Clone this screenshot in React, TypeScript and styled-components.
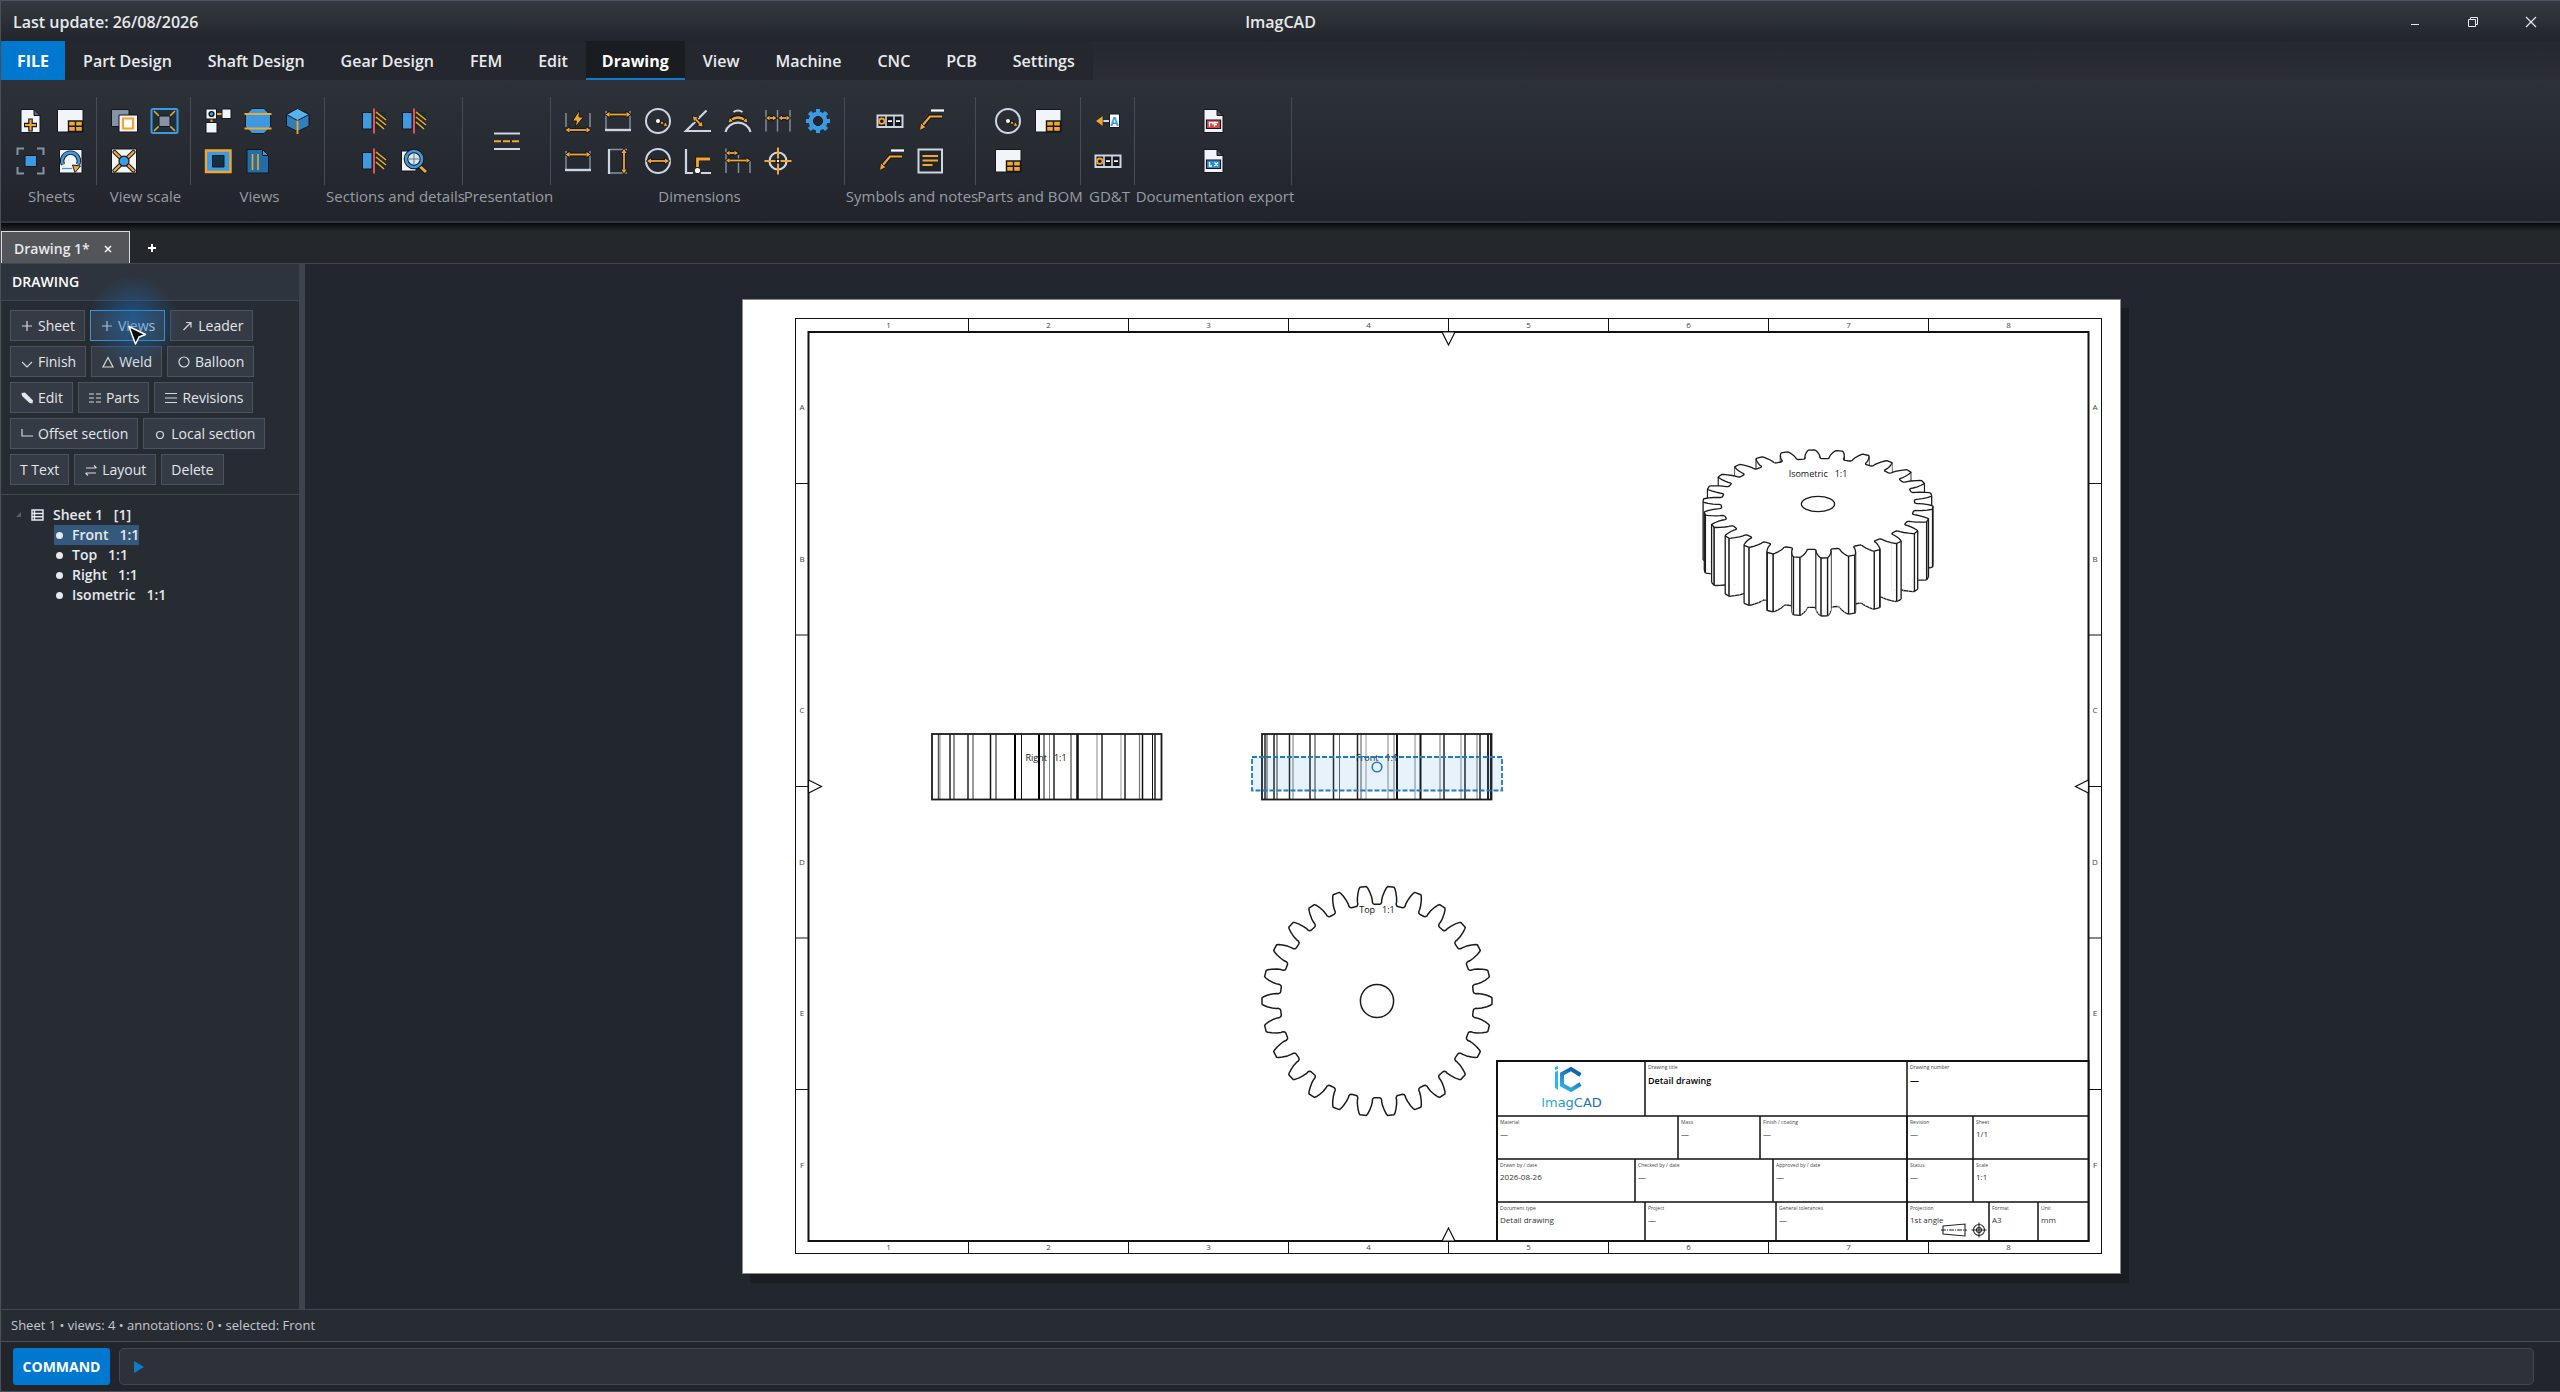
import React from 'react';
import styled, { createGlobalStyle, css } from 'styled-components';

const uiFont = '"Open Sans", "Noto Sans", sans-serif';
const ink = '#14171b';
const orange = '#f0a62f';
const blue = '#3d9ae0';
const paper = '#f1f4f8';
const steel = '#8792a2';
const pale = '#ccd6e4';

const GlobalStyle = createGlobalStyle`
  * { box-sizing: border-box; }
  body { margin: 0; background: #22262e; }
  button, input { font: inherit; color: inherit; }
`;

const Shell = styled.div`
  display: flex;
  flex-direction: column;
  height: 100vh;
  font-family: ${uiFont};
  font-size: 14px;
  line-height: 20px;
  color: #e6e9ed;
  background: #262b32;
  border-left: 1px solid #4a5058;
`;

/* ---------- title bar and ribbon ---------- */

const TitleBar = styled.header`
  display: grid;
  grid-template-columns: 1fr auto 1fr;
  align-items: center;
  height: 41px;
  padding-top: 2px;
  border-top: 1px solid #4d525b;
  background: linear-gradient(#343941, #22252b);
  font-size: 16px;
  font-weight: 600;
`;

const UpdateNote = styled.span`
  padding-left: 12px;
`;

const AppName = styled.h1`
  margin: 0;
  font-size: 16px;
  font-weight: 600;
`;

const WindowButtons = styled.div`
  display: flex;
  justify-content: flex-end;
`;

const WindowButton = styled.button`
  display: grid;
  place-items: center;
  width: 58px;
  height: 38px;
  padding: 0;
  border: 0;
  background: none;
`;

const TabBar = styled.nav`
  display: flex;
  height: 39px;
  background: linear-gradient(#25282e, #2a2e35);
`;

const RibbonTab = styled.button<{ $kind?: 'file' | 'active' }>`
  padding: 2px 18px 0;
  border: 0;
  border-bottom: 2px solid transparent;
  background: #24272d;
  color: #e8eaed;
  font-size: 16px;
  font-weight: 600;
  white-space: nowrap;
  ${({ $kind }) => $kind === 'file' && css`
    padding: 2px 16px 0;
    background: #0078d0;
    border-color: #0078d0;
    color: #fff;
    font-weight: 700;
  `}
  ${({ $kind }) => $kind === 'active' && css`
    padding: 2px 16px 0;
    background: #191c20;
    border-color: #0a7dd0;
    color: #fff;
    font-weight: 700;
  `}
`;

const Ribbon = styled.div`
  display: flex;
  height: 143px;
  padding: 17px 0 0 2px;
  border-bottom: 2px solid #33373d;
  background: linear-gradient(#2d3138, #21252b);
`;

const Group = styled.section<{ $width: number }>`
  display: flex;
  flex-direction: column;
  align-items: center;
  width: ${({ $width }) => $width}px;
  flex: none;
`;

const GroupIcons = styled.div<{ $cols: number }>`
  display: grid;
  grid-template-columns: repeat(${({ $cols }) => $cols}, 40px);
  grid-auto-rows: 40px;
  align-content: center;
  justify-content: center;
  width: 100%;
  height: 88px;
  border-right: 1px solid #484c54;
`;

const ToolButton = styled.button`
  display: grid;
  place-items: center;
  padding: 0;
  border: 0;
  background: none;
`;

const GroupLabel = styled.h2`
  margin: 0;
  padding-left: 3px;
  font-size: 15px;
  line-height: 22px;
  font-weight: 400;
  color: #979ca4;
  white-space: nowrap;
`;

const DocTabs = styled.div`
  display: flex;
  align-items: flex-end;
  height: 41px;
  border-bottom: 1px solid #42474f;
  background: linear-gradient(#07090b, #24282c 8px);
`;

const DocTab = styled.div`
  display: flex;
  align-items: center;
  justify-content: space-between;
  width: 129px;
  height: 32px;
  padding: 2px 12px 0;
  border: 1px solid #d8dade;
  border-bottom: 0;
  background: #535559;
  font-weight: 600;
`;

const FlatButton = styled.button`
  display: grid;
  place-items: center;
  width: 18px;
  height: 30px;
  padding: 0;
  border: 0;
  background: none;
`;

const NewTabButton = styled(FlatButton)`
  width: 44px;
`;

/* ---------- work area ---------- */

const Workspace = styled.main`
  display: flex;
  flex: 1;
  min-height: 0;
`;

const Sidebar = styled.aside`
  width: 298px;
  flex: none;
  background: #272c33;
`;

const Splitter = styled.div`
  width: 6px;
  flex: none;
  background: #3e444c;
`;

const PanelTitle = styled.h2`
  height: 37px;
  margin: 0;
  padding: 0 11px;
  border-bottom: 1px solid #424850;
  background: #2e343d;
  color: #fff;
  font-size: 14px;
  line-height: 36px;
  font-weight: 600;
`;

const ActionRows = styled.div`
  display: flex;
  flex-direction: column;
  gap: 5px;
  padding: 9px;
  border-bottom: 1px solid #424850;
`;

const ActionRow = styled.div`
  display: flex;
  gap: 5px;
`;

const ActionButton = styled.button<{ $hot?: boolean }>`
  position: relative;
  display: flex;
  align-items: center;
  gap: 4px;
  height: 31px;
  padding: 0 9px;
  border: 1px solid ${({ $hot }) => ($hot ? '#3a96dd' : '#4b535c')};
  background: #343b44;
  color: #e3e6ea;
  white-space: nowrap;
`;

const PointerGlow = styled.span`
  position: absolute;
  z-index: 1;
  left: -4px;
  top: -35px;
  width: 92px;
  height: 92px;
  border-radius: 50%;
  background: radial-gradient(closest-side, rgba(28, 110, 190, 0.6), rgba(28, 110, 190, 0.3) 50%, rgba(28, 110, 190, 0));
  pointer-events: none;
`;

const Pointer = styled.svg`
  position: absolute;
  z-index: 2;
  left: 34px;
  top: 12px;
  pointer-events: none;
`;

const Tree = styled.ul`
  margin: 0;
  padding: 10px 0 0 15px;
  list-style: none;
  font-weight: 600;
`;

const Branch = styled.ul`
  margin: 0;
  padding: 0 0 0 38px;
  list-style: none;
`;

const NodeRow = styled.div`
  display: flex;
  align-items: center;
  height: 20px;
  gap: 9px;
  white-space: pre;
`;

const Leaf = styled.li<{ $selected?: boolean }>`
  display: flex;
  align-items: center;
  gap: 9px;
  width: fit-content;
  height: 20px;
  padding-left: 2px;
  background: ${({ $selected }) => ($selected ? '#34597c' : 'transparent')};
  white-space: pre;
`;

const Bullet = styled.span`
  width: 7px;
  height: 7px;
  border-radius: 50%;
  background: #e6e9ed;
`;

const Canvas = styled.section`
  flex: 1;
  min-width: 0;
  display: grid;
  place-items: center;
  padding: 35px 36px 35px 34px;
  background: #22262e;
`;

const Sheet = styled.svg`
  display: block;
  height: calc(100vh - 417px);
  max-width: 100%;
  aspect-ratio: 1379 / 975;
  background: #fff;
  box-shadow: inset 0 0 0 1px #85888c, 8px 9px 0 #1a1d22;
`;

/* ---------- footer ---------- */

const StatusBar = styled.div`
  height: 33px;
  padding: 0 10px;
  border-top: 1px solid #42474f;
  border-bottom: 1px solid #4b5057;
  background: #272c33;
  color: #c3c9d0;
  font-size: 13px;
  line-height: 31px;
`;

const CommandBar = styled.div`
  display: flex;
  gap: 9px;
  height: 50px;
  padding: 6px 26px 6px 12px;
  border-bottom: 1px solid #4b5057;
  background: #22262c;
`;

const CommandButton = styled.button`
  width: 97px;
  padding: 0;
  border: 0;
  border-radius: 3px;
  background: #0078d0;
  color: #fff;
  font-weight: 700;
`;

const CommandField = styled.label`
  display: flex;
  flex: 1;
  align-items: center;
  gap: 8px;
  padding: 0 13px;
  border: 1px solid #43474e;
  border-radius: 5px;
  background: #2e3138;
`;

const CommandInput = styled.input`
  flex: 1;
  border: 0;
  outline: 0;
  background: none;
`;

/* ---------- ribbon icons, 32 x 32 ---------- */

type ArrowProps = { x1: number; y1: number; x2: number; y2: number; head?: number };

function DoubleArrow({ x1, y1, x2, y2, head = 4 }: ArrowProps) {
  const len = Math.hypot(x2 - x1, y2 - y1);
  const ux = (x2 - x1) / len;
  const uy = (y2 - y1) / len;
  const h = head * 0.65;
  const tip = (x: number, y: number, s: number) =>
    `M${x} ${y}L${x + s * ux * head - uy * h} ${y + s * uy * head + ux * h}L${x + s * ux * head + uy * h} ${y + s * uy * head - ux * h}Z`;
  const d = tip(x1, y1, 1) + tip(x2, y2, -1);
  const shaft = `M${x1 + ux * head} ${y1 + uy * head}L${x2 - ux * head} ${y2 - uy * head}`;
  return (
    <g>
      <path d={shaft} stroke={ink} strokeWidth="4" />
      <path d={d} fill={ink} stroke={ink} strokeWidth="1.6" />
      <path d={d} fill={orange} />
      <path d={shaft} stroke={orange} strokeWidth="1.8" />
    </g>
  );
}

const pagePath = 'M7 4.5H20L26 10.5V27.5H7Z';

const tableSheet = (
  <>
    <path d="M3.5 4.5H29V27H3.5Z" fill={paper} stroke={ink} />
    <path d="M14.5 16H28.5V26.5H14.5Z" fill={orange} stroke={ink} strokeWidth="1.4" />
    <path d="M21.5 16V26.5M14.5 21.2H28.5" stroke={ink} strokeWidth="1.4" />
  </>
);

const section = (
  <>
    <path d="M17 7H28V24H17Z" fill="#1c2a2c" />
    <path d="M4.5 7.5H14V24H4.5Z" fill={blue} stroke={ink} />
    <path d="M18 7L28 15M18 12L28 20M18 17L26 24" stroke={orange} strokeWidth="1.6" />
    <path d="M16 3.5V28.5" stroke="#e5514f" strokeWidth="2" />
  </>
);

const linear = (
  <>
    <path d="M4 6V24M28 6V24" stroke={steel} strokeWidth="1.4" />
    <path d="M3 25H29" stroke={pale} strokeWidth="2.4" />
    <DoubleArrow x1={3.5} y1={9.5} x2={28.5} y2={9.5} />
  </>
);

const radius = (
  <>
    <circle cx="16" cy="16" r="12" stroke={pale} strokeWidth="2" />
    <path d="M17 16.5L26 20.5" stroke={ink} strokeWidth="4" />
    <path d="M19 17.5L23 19.2" stroke={orange} strokeWidth="2" strokeDasharray="2 1" />
    <path d="M26 21L21 21.5L23.5 16.8Z" fill={orange} stroke={ink} strokeWidth=".8" />
    <circle cx="16" cy="16" r="2" fill="#fff" />
  </>
);

const controlFrame = (
  <>
    <path d="M3.5 10.5H28.5V22H3.5Z" fill={ink} stroke={pale} strokeWidth="2" />
    <path d="M12 11V22M20 11V22" stroke={pale} strokeWidth="1.6" />
    <circle cx="7.8" cy="16.2" r="2.7" stroke={orange} strokeWidth="1.8" />
    <path d="M14 16.2H18M22 16.2H26" stroke="#fff" strokeWidth="1.8" />
  </>
);

const leader = (
  <>
    <path d="M17 5.5H30" stroke="#fff" strokeWidth="2.2" />
    <path d="M8 22L16 11.5H28" stroke={ink} strokeWidth="4.5" />
    <path d="M8 21L16 11.5H28" stroke={orange} strokeWidth="2.2" />
    <path d="M5.5 25.5L6.8 18L12 22.3Z" fill={orange} stroke={ink} strokeWidth=".8" />
  </>
);

const exportPage = (color: string, mark: string) => (
  <>
    <path d={pagePath} fill={paper} stroke={ink} />
    <path d="M20 4.5V10.5H26Z" fill="#4b525c" stroke={ink} />
    <path d="M9.5 15H23.5V23.5H9.5Z" fill={color} stroke={ink} strokeWidth="1.2" />
    <path d={mark} stroke="#fff" strokeWidth="1.3" />
  </>
);

const gearTeeth = Array.from({ length: 8 }, (_, i) => i * 45);

const icons: Record<string, React.ReactNode> = {
  newSheet: (
    <>
      <path d={pagePath} fill={paper} stroke={ink} />
      <path d="M20 4.5V10.5H26Z" fill="#596270" stroke={ink} />
      <path d="M16.5 13.5V26.5M10 20H23" stroke={ink} strokeWidth="4.6" />
      <path d="M16.5 14.5V25.5M11 20H22" stroke={orange} strokeWidth="2.2" />
    </>
  ),
  tableSheet,
  fit: (
    <>
      <path d="M3.5 10V3.5H10M23 3.5H29.5V10M29.5 22V28.5H23M10 28.5H3.5V22" stroke={steel} strokeWidth="2" />
      <path d="M11 10.5H22.5V21.5H11Z" fill={blue} stroke={ink} />
    </>
  ),
  rotate: (
    <>
      <path d="M5.5 4.5H28V28H5.5Z" fill={paper} stroke={ink} />
      <path d="M9 19.5A8.3 8.3 0 1 1 24 19.5" stroke={ink} strokeWidth="4.4" />
      <path d="M9 19.5A8.3 8.3 0 1 1 24 19.5" stroke={blue} strokeWidth="2.6" />
      <path d="M8 23.5H18" stroke={blue} strokeWidth="1.2" />
      <path d="M18.5 20L26.5 21L21 27.5Z" fill={orange} stroke={ink} />
    </>
  ),
  scaleSheet: (
    <>
      <path d="M3.5 4.5H21V21.5H3.5Z" fill={steel} stroke={ink} />
      <path d="M11 10H29.5V27H11Z" fill={paper} stroke={ink} />
      <path d="M15 13.5H25V23.5H15Z" fill="#fff" stroke={orange} strokeWidth="2.2" />
    </>
  ),
  scaleFit: (
    <>
      <rect x="3.5" y="4" width="26" height="24" rx="1.5" fill="#20303b" stroke={blue} strokeWidth="2" />
      <path d="M6 6L11 11M27 6L22 11M6 26L11 21M27 26L22 21" stroke={orange} strokeWidth="1.6" />
      <path d="M11 11H22V21.5H11Z" fill={steel} stroke={ink} />
    </>
  ),
  scaleCustom: (
    <>
      <path d="M3.5 4H28.5V28H3.5Z" fill={paper} stroke={ink} />
      <path d="M6.5 7L25.5 25.5M25.5 7L6.5 25.5" stroke={ink} strokeWidth="4.4" strokeLinecap="round" />
      <path d="M6.5 7L25.5 25.5M25.5 7L6.5 25.5" stroke={orange} strokeWidth="2.4" strokeLinecap="round" />
      <circle cx="16" cy="16.2" r="5" fill={blue} stroke={ink} strokeWidth="1.2" />
    </>
  ),
  projected: (
    <>
      <path d="M14 9H20M9.5 13V18" stroke={orange} strokeWidth="2" />
      <path d="M4 4H14.5V14H4ZM20 4H29V13.5H20ZM4 17.5H15V28H4Z" fill={paper} stroke={ink} />
      <circle cx="9.5" cy="9" r="2.4" fill={blue} stroke={ink} strokeWidth="1.4" />
    </>
  ),
  breakView: (
    <>
      <path d="M10 3.5H22L28.5 10V22L22 28.5H10L3.5 22V10Z" fill={blue} stroke={ink} />
      <path d="M2.5 9H29.5M2.5 23.5H29.5" stroke={orange} strokeWidth="1.8" />
    </>
  ),
  cube: (
    <>
      <path d="M15.5 3.5L27 9.5V21L15.5 26.5L4.5 21V9.5Z" fill="#2f7fbd" stroke={ink} />
      <path d="M15.5 3.5L27 9.5L15.5 15.5L4.5 9.5Z" fill="#56b2f0" stroke={ink} />
      <path d="M15.5 15.5V29" stroke={orange} strokeWidth="1.8" />
    </>
  ),
  crop: (
    <>
      <path d="M4 5.5H28.5V27H4Z" fill={blue} stroke={orange} strokeWidth="2.4" />
      <path d="M10.5 10.5H22V22H10.5Z" fill="#12303f" stroke={ink} />
    </>
  ),
  brokenPage: (
    <>
      <path d="M5 4.5H20.5L26.5 10.5V28H5Z" fill="#226da6" stroke={ink} />
      <path d="M20.5 4.5V10.5H26.5Z" fill={blue} stroke={ink} />
      <path d="M10.5 9V25M16 9V25" stroke={orange} strokeWidth="1.6" />
    </>
  ),
  section,
  detail: (
    <>
      <path d="M3.5 6H18V26H3.5Z" fill={paper} stroke={ink} />
      <path d="M20.5 20L28 27.5" stroke={ink} strokeWidth="5" />
      <path d="M20.5 20L28 27" stroke={orange} strokeWidth="3" />
      <circle cx="16" cy="14" r="8" fill="#d7e6f2" stroke={ink} strokeWidth="4.6" />
      <circle cx="16" cy="14" r="8" stroke={blue} strokeWidth="2.6" />
      <path d="M16 8.5V19.5M10.5 14H21.5" stroke="#6b7683" />
    </>
  ),
  lines: (
    <>
      <path d="M3 8.5H29M3 24H29" stroke={pale} strokeWidth="2.2" />
      <path d="M3 16.2H29" stroke={orange} strokeWidth="2" strokeDasharray="7 2" />
    </>
  ),
  smart: (
    <>
      <path d="M4 8V22M28 8V22" stroke={steel} strokeWidth="1.4" />
      <path d="M17.5 5L10.5 16H14.5L13 22.5L21.5 12H17Z" fill={orange} stroke={ink} />
      <DoubleArrow x1={3.5} y1={25} x2={28.5} y2={25} />
    </>
  ),
  linear,
  radius,
  angle: (
    <>
      <path d="M24.5 5.5L4 26H29" stroke={pale} strokeWidth="2.2" />
      <DoubleArrow x1={11} y1={11.5} x2={20.5} y2={21.5} />
    </>
  ),
  arc: (
    <>
      <path d="M11.5 7Q16 4 20.5 7" stroke={pale} strokeWidth="2" />
      <path d="M3.5 27A13 13 0 0 1 28.5 27" stroke={pale} strokeWidth="2.2" />
      <path d="M7.5 16Q16 8 24.5 16" stroke={ink} strokeWidth="4.6" />
      <path d="M8.5 15.5Q16 9.5 23.5 15.5" stroke={orange} strokeWidth="2.2" />
      <path d="M6 18L7.5 12.5L11.5 16.5ZM26 18L24.5 12.5L20.5 16.5Z" fill={orange} stroke={ink} strokeWidth=".8" />
    </>
  ),
  chain: (
    <>
      <path d="M4 5V26.5M15.5 5V26.5M28 5V26.5" stroke={steel} strokeWidth="1.4" />
      <DoubleArrow x1={4} y1={13} x2={14.5} y2={13} head={3.5} />
      <DoubleArrow x1={16.5} y1={13} x2={28} y2={13} head={3.5} />
    </>
  ),
  gear: (
    <>
      {gearTeeth.map((a) => (
        <rect key={a} x="13.5" y="3.5" width="5" height="7" fill={blue} stroke={ink} strokeWidth=".6" transform={`rotate(${a} 16 16)`} />
      ))}
      <circle cx="16" cy="16" r="7" stroke={blue} strokeWidth="5" />
      <circle cx="16" cy="16" r="4.5" fill="#23272d" stroke={ink} />
    </>
  ),
  vertical: (
    <>
      <path d="M8 4.5H25M8 28H25" stroke={steel} strokeWidth="1.4" />
      <path d="M7 4V29" stroke={pale} strokeWidth="2.2" />
      <DoubleArrow x1={22} y1={4} x2={22} y2={28.5} />
    </>
  ),
  diameter: (
    <>
      <circle cx="16" cy="16" r="12" stroke={pale} strokeWidth="2" />
      <DoubleArrow x1={5} y1={16} x2={27} y2={16} />
    </>
  ),
  ordinate: (
    <>
      <path d="M4 4V28H11M19 28H29" stroke={pale} strokeWidth="2.2" />
      <path d="M15.5 22V14H28" stroke={ink} strokeWidth="4.5" />
      <path d="M15.5 22V14H28" stroke={orange} strokeWidth="2.8" />
      <circle cx="15.5" cy="25.5" r="2.6" fill="#fff" />
    </>
  ),
  baseline: (
    <>
      <path d="M4 3.5V28M16.5 10V28M28 15V28" stroke={steel} strokeWidth="1.4" />
      <DoubleArrow x1={4} y1={8} x2={16} y2={8} head={3.5} />
      <DoubleArrow x1={4} y1={15.5} x2={28} y2={15.5} head={3.5} />
    </>
  ),
  centerMark: (
    <>
      <circle cx="16" cy="16" r="8.5" stroke={pale} strokeWidth="2.2" />
      <path d="M16 2.5V29.5M2.5 16H29.5" stroke={orange} strokeWidth="2" />
      <circle cx="16" cy="16" r="2.6" fill={ink} />
      <circle cx="16" cy="16" r="1.2" fill="#fff" />
    </>
  ),
  controlFrame,
  leader,
  note: (
    <>
      <path d="M4.5 4.5H28V27.5H4.5Z" fill="#20252b" stroke={pale} strokeWidth="2" />
      <path d="M8.5 11H24M8.5 15.5H24M8.5 20H18.5" stroke={orange} strokeWidth="1.8" />
    </>
  ),
  datum: (
    <>
      <path d="M9 16H18" stroke={pale} strokeWidth="2" />
      <path d="M3.5 16L11 10.5V21.5Z" fill={orange} stroke={ink} strokeWidth=".6" />
      <path d="M17.5 9H27.5V22.5H17.5Z" fill="#fff" stroke={ink} />
      <text x="22.5" y="20.5" textAnchor="middle" fontSize="12" fontWeight="700" fill={blue}>A</text>
    </>
  ),
  exportPdf: exportPage('#d24a48', 'M12.5 21.5V17.5H16V19.5M17.5 21.5V17.5H21M17.5 19.5H20'),
  exportDxf: exportPage('#2f8bd0', 'M12.5 17V21H15M17.5 17.5L21 21M21 17.5L17.5 21'),
};

const ribbonGroups: { label: string; width: number; cols: number; tools: [string, string][] }[] = [
  { label: 'Sheets', width: 94, cols: 2, tools: [['New sheet', 'newSheet'], ['Sheet format', 'tableSheet'], ['Fit sheet', 'fit'], ['Update sheet', 'rotate']] },
  { label: 'View scale', width: 94, cols: 2, tools: [['Sheet scale', 'scaleSheet'], ['Scale to fit', 'scaleFit'], ['Custom scale', 'scaleCustom']] },
  { label: 'Views', width: 134, cols: 3, tools: [['Projected views', 'projected'], ['Break view', 'breakView'], ['Isometric view', 'cube'], ['Crop view', 'crop'], ['Broken-out view', 'brokenPage']] },
  { label: 'Sections and details', width: 138, cols: 2, tools: [['Section', 'section'], ['Offset section', 'section'], ['Local section', 'section'], ['Detail view', 'detail']] },
  { label: 'Presentation', width: 88, cols: 1, tools: [['Line display', 'lines']] },
  { label: 'Dimensions', width: 294, cols: 7, tools: [['Smart', 'smart'], ['Horizontal', 'linear'], ['Radius', 'radius'], ['Angle', 'angle'], ['Arc length', 'arc'], ['Chain', 'chain'], ['Dimension settings', 'gear'], ['Linear', 'linear'], ['Vertical', 'vertical'], ['Diameter', 'diameter'], ['Ordinate', 'ordinate'], ['Baseline', 'baseline'], ['Center mark', 'centerMark']] },
  { label: 'Symbols and notes', width: 131, cols: 2, tools: [['Symbol frame', 'controlFrame'], ['Leader', 'leader'], ['Leader note', 'leader'], ['Note', 'note']] },
  { label: 'Parts and BOM', width: 105, cols: 2, tools: [['Balloon', 'radius'], ['Parts list', 'tableSheet'], ['Revision table', 'tableSheet']] },
  { label: 'GD&T', width: 54, cols: 1, tools: [['Datum', 'datum'], ['Control frame', 'controlFrame']] },
  { label: 'Documentation export', width: 157, cols: 1, tools: [['Export PDF', 'exportPdf'], ['Export DXF', 'exportDxf']] },
];

const tabs = ['FILE', 'Part Design', 'Shaft Design', 'Gear Design', 'FEM', 'Edit', 'Drawing', 'View', 'Machine', 'CNC', 'PCB', 'Settings'];

/* ---------- sidebar actions ---------- */

const glyphs: Record<string, string> = {
  plus: 'M2 8H12M7 3V13',
  leader: 'M3.5 12L10.5 5M6 4.5H11V9.5',
  check: 'M2 8L7 13L12 8',
  triangle: 'M7 3.5L12 13H2Z',
  circle: 'M7 3A5 5 0 1 1 7 13A5 5 0 1 1 7 3',
  list: 'M1 4H6M8 4H13M1 8H6M8 8H13M1 12H6M8 12H13',
  menu: 'M1 3.5H13M1 8H13M1 12.5H13',
  corner: 'M2 3V10H13',
  dot: 'M7 5.5A3.5 3.5 0 1 1 7 12.5A3.5 3.5 0 1 1 7 5.5',
  swap: 'M2 6H12M10 3.5L12.5 6M12 11H2M4 13.5L1.5 11',
};

const actionRows: { label: string; icon?: string; hot?: boolean }[][] = [
  [{ label: 'Sheet', icon: 'plus' }, { label: 'Views', icon: 'plus', hot: true }, { label: 'Leader', icon: 'leader' }],
  [{ label: 'Finish', icon: 'check' }, { label: 'Weld', icon: 'triangle' }, { label: 'Balloon', icon: 'circle' }],
  [{ label: 'Edit', icon: 'pencil' }, { label: 'Parts', icon: 'list' }, { label: 'Revisions', icon: 'menu' }],
  [{ label: 'Offset section', icon: 'corner' }, { label: 'Local section', icon: 'dot' }],
  [{ label: 'T Text' }, { label: 'Layout', icon: 'swap' }, { label: 'Delete' }],
];

function Glyph({ name }: { name: string }) {
  return (
    <svg width="14" height="16" viewBox="0 0 14 16" fill="none" stroke="#d5d9de" strokeWidth="1.2" aria-hidden="true">
      {name === 'pencil' ? (
        <path d="M1.5 3L5 2.5L13 10.5L12.5 13.5L9.5 13L2 6Z" fill="#e3e6ea" stroke="none" />
      ) : (
        <path d={glyphs[name]} />
      )}
    </svg>
  );
}

/* ---------- drawing geometry ---------- */

const TEETH = 26;
/* radius and half angle of a tooth, from root to tip */
const toothProfile: [number, number][] = [
  [96.7, 0.096], [97.2, 0.083], [98.8, 0.074], [101, 0.074], [105, 0.067], [110, 0.052],
  [113.5, 0.038], [115, 0.028],
];

type Vertex = { x: number; y: number; corner: boolean };

function gearOutline(phase: number): Vertex[] {
  const pts: Vertex[] = [];
  for (let i = 0; i < TEETH; i++) {
    const mid = phase + (i * 2 * Math.PI) / TEETH;
    const add = (r: number, a: number, corner: boolean) => pts.push({ x: r * Math.cos(a), y: r * Math.sin(a), corner });
    toothProfile.forEach(([r, h], k) => add(r, mid - h, k === toothProfile.length - 1));
    [...toothProfile].reverse().forEach(([r, h], k) => add(r, mid + h, k === 0));
  }
  return pts;
}

const f = (n: number) => n.toFixed(1);

function TopGear() {
  const d = gearOutline(0).map((p, i) => `${i ? 'L' : 'M'}${f(635 + p.x)} ${f(702 + p.y)}`).join('') + 'Z';
  return (
    <g stroke="#1b1b1b" strokeWidth="1.5" fill="none" strokeLinejoin="round">
      <path d={d} />
      <circle cx="635" cy="702" r="16.6" />
    </g>
  );
}

function IsoGear() {
  const cx = 1076;
  const cy = 205;
  const tilt = 0.47;
  const depth = 58;
  const pts = gearOutline(Math.PI / 2 - 0.055);
  const n = pts.length;
  const px = (p: Vertex) => cx + p.x;
  const py = (p: Vertex) => cy + p.y * tilt;
  const facing = (i: number) => pts[(i + 1) % n].x < pts[i].x;
  const faces = pts
    .map((a, i) => ({ a, b: pts[(i + 1) % n], i }))
    .filter(({ i }) => facing(i))
    .sort((p, q) => p.a.y + p.b.y - q.a.y - q.b.y);
  const top = pts.map((p, i) => `${i ? 'L' : 'M'}${f(px(p))} ${f(py(p))}`).join('') + 'Z';
  return (
    <g stroke="#1b1b1b" strokeWidth="1.3" fill="none" strokeLinejoin="round">
      {faces.map(({ a, b, i }) => {
        const edgeA = a.corner || !facing((i - 1 + n) % n);
        const edgeB = b.corner || !facing((i + 1) % n);
        return (
          <g key={i}>
            <path
              d={`M${f(px(a))} ${f(py(a))}L${f(px(b))} ${f(py(b))}V${f(py(b) + depth)}L${f(px(a))} ${f(py(a) + depth)}Z`}
              fill="#fff"
              stroke="#fff"
              strokeWidth=".3"
            />
            <path d={`M${f(px(a))} ${f(py(a) + depth)}L${f(px(b))} ${f(py(b) + depth)}`} />
            {edgeA && <path d={`M${f(px(a))} ${f(py(a))}v${depth}`} />}
            {edgeB && <path d={`M${f(px(b))} ${f(py(b))}v${depth}`} />}
          </g>
        );
      })}
      <path d={top} fill="#fff" />
      <ellipse cx={cx} cy={cy} rx="16.6" ry="7.7" />
    </g>
  );
}

/* x offset, stroke weight, shade */
const rightLines: [number, number, string][] = [
  [6.5, 1.5, '#555'], [8, 1, '#888'], [18, 1.5, '#222'], [22, 1, '#222'], [36, 1.5, '#222'], [41, 1, '#333'],
  [58.5, 1.5, '#111'], [64, 1, '#111'], [83, 2, '#000'], [89.5, 1, '#111'], [107, 2, '#000'], [112, 1, '#111'],
  [117.5, 1, '#888'], [122, 1.5, '#222'], [139, 1, '#222'], [145.5, 2.5, '#111'], [165, 1, '#888'], [170, 1.5, '#222'],
  [189, 1, '#999'], [193, 1.5, '#222'], [207.5, 1.2, '#777'], [210.5, 1.5, '#111'], [220.5, 1, '#111'], [223, 1.5, '#222'],
];
const frontLines: [number, number, string][] = [
  [3, 1.5, '#222'], [5, 1, '#444'], [12, 1.5, '#222'], [15, 1, '#333'], [27.5, 1.5, '#222'], [31, 1, '#777'],
  [48, 1.5, '#222'], [53, 1, '#333'], [71.5, 1.5, '#222'], [77.5, 1, '#666'], [95.5, 1.5, '#222'], [99, 1, '#555'],
  [104, 1, '#999'], [126, 1, '#888'], [132, 1, '#777'], [135, 2, '#111'], [153, 1, '#888'], [158.5, 2, '#111'],
  [178, 1, '#777'], [182, 1.5, '#222'], [199, 1, '#888'], [203, 1.5, '#222'], [215, 1, '#777'], [218, 1.5, '#222'],
  [226, 1.8, '#111'], [228.5, 1.2, '#222'],
];

function SideView({ x, lines }: { x: number; lines: [number, number, string][] }) {
  return (
    <g fill="none">
      {lines.map(([dx, w, c]) => (
        <path key={dx} d={`M${x + dx} 435V500.5`} stroke={c} strokeWidth={w} />
      ))}
      <rect x={x} y="435" width="229.5" height="65.5" stroke="#1b1b1b" strokeWidth="1.8" />
    </g>
  );
}

const columns = [1, 2, 3, 4, 5, 6, 7, 8];
const rows = ['A', 'B', 'C', 'D', 'E', 'F'];

function Border() {
  return (
    <g stroke="#111" fill="none">
      <rect x="53.5" y="19.5" width="1306" height="935" strokeWidth="1" />
      <rect x="66.5" y="33" width="1280" height="909" strokeWidth="2" />
      {columns.slice(1).map((c, i) => (
        <path key={c} d={`M${226.5 + i * 160} 19.5V33M${226.5 + i * 160} 942V954.5`} />
      ))}
      {rows.slice(1).map((r, i) => (
        <path key={r} d={`M53.5 ${184.5 + i * 151.5}H66.5M1346.5 ${184.5 + i * 151.5}H1359.5`} />
      ))}
      <g fill="#fff" strokeWidth="1.2">
        <path d="M700 33H713L706.5 46Z" />
        <path d="M700 942H713L706.5 929Z" />
        <path d="M66.5 481V494L79.5 487.5Z" />
        <path d="M1346.5 481V494L1333.5 487.5Z" />
      </g>
      <g fill="#444" stroke="none" fontSize="8" textAnchor="middle">
        {columns.map((c, i) => (
          <React.Fragment key={c}>
            <text x={146.5 + i * 160} y="29">{c}</text>
            <text x={146.5 + i * 160} y="951">{c}</text>
          </React.Fragment>
        ))}
        {rows.map((r, i) => (
          <React.Fragment key={r}>
            <text x="60" y={111 + i * 151.5}>{r}</text>
            <text x="1353" y={111 + i * 151.5}>{r}</text>
          </React.Fragment>
        ))}
      </g>
    </g>
  );
}

const titleRows: { y: number; cells: [number, string, string][] }[] = [
  { y: 817, cells: [[755, 'Material', '—'], [936, 'Mass', '—'], [1018, 'Finish / coating', '—'], [1165, 'Revision', '—'], [1231, 'Sheet', '1/1']] },
  { y: 860, cells: [[755, 'Drawn by / date', '2026-08-26'], [893, 'Checked by / date', '—'], [1031, 'Approved by / date', '—'], [1165, 'Status', '—'], [1231, 'Scale', '1:1']] },
  { y: 903, cells: [[755, 'Document type', 'Detail drawing'], [903, 'Project', '—'], [1034, 'General tolerances', '—'], [1165, 'Projection', '1st angle'], [1247, 'Format', 'A3'], [1296, 'Unit', 'mm']] },
];

function TitleBlock() {
  const bottoms = [860, 903, 942];
  return (
    <g>
      <g stroke="#111" strokeWidth="1.5" fill="none">
        <rect x="755" y="762" width="591.5" height="180" fill="#fff" strokeWidth="2" />
        <path d="M755 817H1346M755 860H1346M755 903H1346M903 762V817M1165 762V942" />
        {titleRows.map((row, r) => row.cells.slice(1).map(([x]) => <path key={`${r}-${x}`} d={`M${x} ${row.y}V${bottoms[r]}`} />))}
      </g>
      <g fill="#444" fontSize="5">
        <text x="906" y="770">Drawing title</text>
        <text x="1168" y="770">Drawing number</text>
        {titleRows.map((row) => row.cells.map(([x, label]) => <text key={`${row.y}-${x}`} x={x + 3} y={row.y + 8}>{label}</text>))}
      </g>
      <g fill="#333" fontSize="8">
        {titleRows.map((row) => row.cells.map(([x, , value]) => <text key={`${row.y}-${x}`} x={x + 3} y={row.y + 21}>{value}</text>))}
      </g>
      <g fill="#000" fontSize="9" fontWeight="600">
        <text x="906" y="785">Detail drawing</text>
        <text x="1168" y="785">—</text>
      </g>
      <g stroke="#222" fill="none" strokeWidth="1.1">
        <path d="M1201 927L1223 925V937L1201 935Z" />
        <path d="M1199 931H1225" strokeDasharray="5 1 1 1" />
        <circle cx="1237" cy="931" r="5.5" />
        <circle cx="1237" cy="931" r="2.5" />
        <path d="M1229.5 931H1244.5M1237 923.5V938.5" />
      </g>
      <defs>
        <linearGradient id="brand" x1="0" x2="1">
          <stop offset="0" stopColor="#27b7dc" />
          <stop offset="1" stopColor="#1b61ac" />
        </linearGradient>
        <linearGradient id="brandMark" x1="0" y1="1" x2="0.6" y2="0">
          <stop offset="0" stopColor="#35b8ee" />
          <stop offset="1" stopColor="#1560ad" />
        </linearGradient>
      </defs>
      <path d="M813 773L816 771.5V791L813 789ZM813 768L816 767V770L813 771Z" fill="#31b4e6" />
      <path d="M838.5 776L829 770L820 775V786L829 791L838.5 785" fill="none" stroke="url(#brandMark)" strokeWidth="4" />
      <text x="829.5" y="808" textAnchor="middle" fontFamily="'DejaVu Sans', sans-serif" fontSize="13" fontWeight="400" fill="url(#brand)">ImagCAD</text>
    </g>
  );
}

function DrawingSheet() {
  const gap = '\u00a0\u00a0\u00a0';
  return (
    <Sheet viewBox="0 0 1379 975" role="img" aria-label="Sheet 1" fontFamily={uiFont}>
      <Border />
      <SideView x={190} lines={rightLines} />
      <SideView x={520} lines={frontLines} />
      <TopGear />
      <IsoGear />
      <g fontSize="9" fill="#111" textAnchor="middle">
        <text x="304" y="462">{`Right${gap}1:1`}</text>
        <text x="635" y="462">{`Front${gap}1:1`}</text>
        <text x="635" y="614">{`Top${gap}1:1`}</text>
        <text x="1076" y="178">{`Isometric${gap}1:1`}</text>
      </g>
      <rect x="510" y="458" width="250" height="33.5" fill="rgba(30,127,215,.1)" stroke="#1c7cc7" strokeWidth="1.8" strokeDasharray="5 2" />
      <circle cx="635" cy="468" r="4.8" fill="#e8f2fb" stroke="#1c7cc7" strokeWidth="1.6" />
      <TitleBlock />
    </Sheet>
  );
}

const views = ['Front', 'Top', 'Right', 'Isometric'];

export default function App() {
  return (
    <Shell>
      <GlobalStyle />
      <TitleBar>
        <UpdateNote>Last update: 26/08/2026</UpdateNote>
        <AppName>ImagCAD</AppName>
        <WindowButtons>
          <WindowButton aria-label="Minimize">
            <svg width="12" height="12" stroke="#e6e9ed" fill="none"><path d="M2 8.5H10" /></svg>
          </WindowButton>
          <WindowButton aria-label="Restore">
            <svg width="12" height="12" stroke="#e6e9ed" fill="none"><path d="M3.5 3.5V1.5H10.5V8.5H8.5M1.5 3.5H8.5V10.5H1.5Z" /></svg>
          </WindowButton>
          <WindowButton aria-label="Close">
            <svg width="12" height="12" stroke="#e6e9ed" fill="none" strokeWidth="1.2"><path d="M1 1L11 11M11 1L1 11" /></svg>
          </WindowButton>
        </WindowButtons>
      </TitleBar>
      <TabBar>
        {tabs.map((tab) => (
          <RibbonTab key={tab} $kind={tab === 'FILE' ? 'file' : tab === 'Drawing' ? 'active' : undefined}>{tab}</RibbonTab>
        ))}
      </TabBar>
      <Ribbon>
        {ribbonGroups.map((group) => (
          <Group key={group.label} $width={group.width}>
            <GroupIcons $cols={group.cols}>
              {group.tools.map(([name, icon]) => (
                <ToolButton key={name} aria-label={name}>
                  <svg width="32" height="32" viewBox="0 0 32 32" fill="none" aria-hidden="true">{icons[icon]}</svg>
                </ToolButton>
              ))}
            </GroupIcons>
            <GroupLabel>{group.label}</GroupLabel>
          </Group>
        ))}
      </Ribbon>
      <DocTabs>
        <DocTab>
          Drawing 1*
          <FlatButton aria-label="Close Drawing 1">
            <svg width="8" height="8" stroke="#fff" strokeWidth="1.5"><path d="M1 1L7 7M7 1L1 7" /></svg>
          </FlatButton>
        </DocTab>
        <NewTabButton aria-label="New drawing">
          <svg width="8" height="8" stroke="#fff" strokeWidth="2"><path d="M4 0V8M0 4H8" /></svg>
        </NewTabButton>
      </DocTabs>
      <Workspace>
        <Sidebar>
          <PanelTitle>DRAWING</PanelTitle>
          <ActionRows>
            {actionRows.map((row, i) => (
              <ActionRow key={i}>
                {row.map(({ label, icon, hot }) => (
                  <ActionButton key={label} $hot={hot}>
                    {icon && <Glyph name={icon} />}
                    {label}
                    {hot && (
                      <>
                        <PointerGlow />
                        <Pointer width="24" height="26" viewBox="0 0 24 26">
                          <path d="M4 3.5L20.5 11.5L14 14L10.5 21Z" fill="#0a0a0a" stroke="#fff" strokeWidth="1.5" strokeLinejoin="round" />
                        </Pointer>
                      </>
                    )}
                  </ActionButton>
                ))}
              </ActionRow>
            ))}
          </ActionRows>
          <Tree>
            <li>
              <NodeRow>
                <svg width="6" height="6" fill="#5a6067"><path d="M5 0V5H0Z" /></svg>
                <svg width="13" height="12" fill="none" stroke="#e6e9ed" strokeWidth="1.4"><path d="M1 1H12V11H1ZM1 4.5H12M1 7.8H12M3.5 1V11" /></svg>
                <span>{'Sheet 1   [1]'}</span>
              </NodeRow>
              <Branch>
                {views.map((view, i) => (
                  <Leaf key={view} $selected={i === 0}>
                    <Bullet />
                    {`${view}   1:1`}
                  </Leaf>
                ))}
              </Branch>
            </li>
          </Tree>
        </Sidebar>
        <Splitter />
        <Canvas>
          <DrawingSheet />
        </Canvas>
      </Workspace>
      <StatusBar>Sheet 1 • views: 4 • annotations: 0 • selected: Front</StatusBar>
      <CommandBar>
        <CommandButton>COMMAND</CommandButton>
        <CommandField>
          <svg width="11" height="12" fill="#0a7dd0" aria-hidden="true"><path d="M1 0L11 6L1 12Z" /></svg>
          <CommandInput aria-label="Command" />
        </CommandField>
      </CommandBar>
    </Shell>
  );
}
